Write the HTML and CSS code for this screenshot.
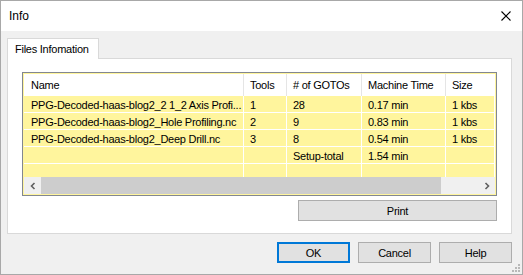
FILE: index.html
```html
<!DOCTYPE html>
<html>
<head>
<meta charset="utf-8">
<link rel="stylesheet" href="styles.css">
</head>
<body>
<div class="window">
  <div class="titlebar">
    <span class="title">Info</span>
    <svg class="close" width="10" height="10" viewBox="0 0 10 10"><path d="M0.5 0.5 L9.5 9.5 M9.5 0.5 L0.5 9.5" stroke="#000" stroke-width="1.1" fill="none"/></svg>
  </div>
  <div class="body">
    <div class="tabstrip"><div class="tab">Files Infomation</div></div>
    <div class="panel">
      <div class="list">
        <div class="grid">
          <div class="hc">Name</div><div class="hc">Tools</div><div class="hc"># of GOTOs</div><div class="hc">Machine Time</div><div class="hc last">Size</div>
          <div class="c name">PPG-Decoded-haas-blog2_2 1_2 Axis Profi...</div><div class="c">1</div><div class="c">28</div><div class="c">0.17 min</div><div class="c">1 kbs</div>
          <div class="c name">PPG-Decoded-haas-blog2_Hole Profiling.nc</div><div class="c">2</div><div class="c">9</div><div class="c">0.83 min</div><div class="c">1 kbs</div>
          <div class="c name">PPG-Decoded-haas-blog2_Deep Drill.nc</div><div class="c">3</div><div class="c">8</div><div class="c">0.54 min</div><div class="c">1 kbs</div>
          <div class="c name"></div><div class="c"></div><div class="c">Setup-total</div><div class="c">1.54 min</div><div class="c"></div>
          <div class="c p"></div><div class="c p"></div><div class="c p"></div><div class="c p"></div><div class="c p"></div>
        </div>
        <div class="hscroll">
          <div class="sbtn"><svg width="8" height="8" viewBox="0 0 8 8"><path d="M5.5 1 L2.5 4 L5.5 7" stroke="#606060" stroke-width="1.6" fill="none"/></svg></div>
          <div class="thumb"></div>
          <div class="track"></div>
          <div class="sbtn"><svg width="8" height="8" viewBox="0 0 8 8"><path d="M2.5 1 L5.5 4 L2.5 7" stroke="#606060" stroke-width="1.6" fill="none"/></svg></div>
        </div>
      </div>
      <div class="printrow"><button class="btn print">Print</button></div>
    </div>
    <div class="footer">
      <button class="btn ok">OK</button>
      <button class="btn">Cancel</button>
      <button class="btn">Help</button>
    </div>
  </div>
  <svg class="grip" width="10" height="10" viewBox="0 0 10 10"><g fill="#b8b8b8"><rect x="7" y="1" width="2" height="2"/><rect x="4" y="4" width="2" height="2"/><rect x="7" y="4" width="2" height="2"/><rect x="1" y="7" width="2" height="2"/><rect x="4" y="7" width="2" height="2"/><rect x="7" y="7" width="2" height="2"/></g></svg>
</div>
</body>
</html>
```
FILE: styles.css
```css
* { box-sizing: border-box; }
html, body { margin: 0; padding: 0; }
body {
  font-family: "Liberation Sans", Arial, sans-serif;
  font-size: 11px;
  letter-spacing: -0.25px;
  color: #000;
}
.window {
  position: relative;
  width: 523px;
  height: 275px;
  border: 1px solid #a8a8a8;
  background: #f0f0f0;
  display: flex;
  flex-direction: column;
}
.titlebar {
  height: 30px;
  background: #fff;
  display: flex;
  align-items: center;
  justify-content: space-between;
  padding: 0 11px 0 8px;
}
.title { font-size: 12px; letter-spacing: 0; }
.close { display: block; }
.body {
  padding: 7px 10px 0 6px;
  display: flex;
  flex-direction: column;
}
.tabstrip { display: flex; height: 20px; }
.tab {
  width: 92px;
  height: 21px;
  background: #fff;
  border: 1px solid #d9d9d9;
  border-bottom: none;
  padding: 4px 0 0 7px;
  white-space: nowrap;
  position: relative;
  z-index: 1;
}
.panel {
  width: 505px;
  height: 176px;
  background: #fff;
  border: 1px solid #d9d9d9;
  padding: 13px 14px 0 14px;
}
.list {
  width: 475px;
  height: 124px;
  border: 1px solid #828790;
  padding: 1px;
  background: #fff59d;
  display: flex;
  flex-direction: column;
}
.grid {
  display: grid;
  grid-template-columns: 220px 43px 75px 84px 1fr;
  grid-template-rows: 22px repeat(4, 17px) 13px;
  overflow: hidden;
}
.hc {
  background: #fff;
  border-right: 1px solid #e5e5e5;
  padding: 5px 0 0 6px;
  white-space: nowrap;
}
.hc:first-child { padding-left: 7px; }
.hc.last { border-right: none; }
.c {
  border-right: 1px solid #fff;
  border-bottom: 1px solid #fff;
  padding: 3px 0 0 6px;
  white-space: nowrap;
  overflow: hidden;
}
.c.name { padding-left: 7px; }
.c.p { border-bottom: none; }
.hscroll {
  height: 17px;
  display: flex;
  background: #f0f0f0;
}
.sbtn {
  width: 17px;
  display: flex;
  align-items: center;
  justify-content: center;
}
.thumb { width: 400px; background: #cdcdcd; }
.track { flex: 1; }
.printrow {
  display: flex;
  justify-content: flex-end;
  padding-top: 4px;
}
.btn {
  font-family: "Liberation Sans", Arial, sans-serif;
  font-size: 11px;
  letter-spacing: -0.25px;
  color: #000;
  background: #e1e1e1;
  border: 1px solid #adadad;
  height: 21px;
  padding: 0;
  margin: 0;
}
.print { width: 199px; }
.footer {
  display: flex;
  justify-content: flex-end;
  gap: 8px;
  padding-top: 8px;
}
.footer .btn { width: 73px; }
.btn.ok { border: 2px solid #0078d7; }
.grip { position: absolute; right: 1px; bottom: 1px; }
```
